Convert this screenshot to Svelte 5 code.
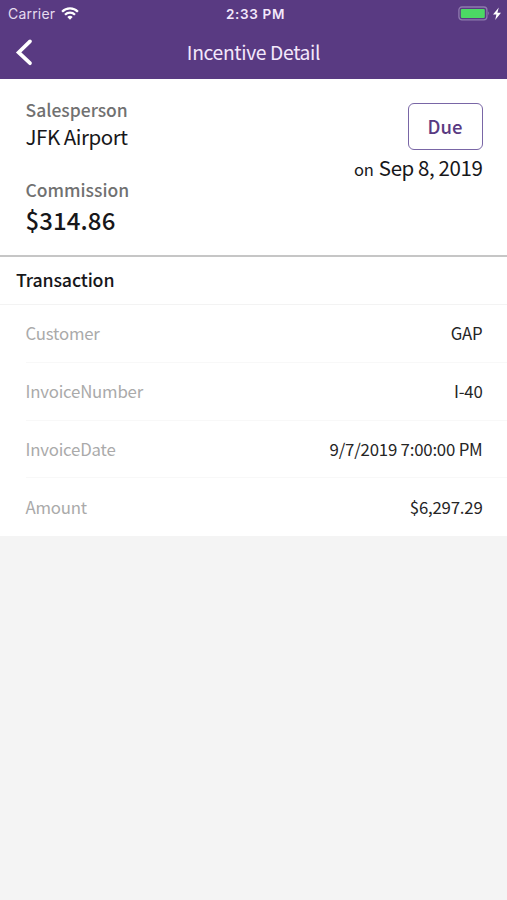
<script>
  const rows = [
    { label: 'Customer', value: 'GAP' },
    { label: 'InvoiceNumber', value: 'I-40' },
    { label: 'InvoiceDate', value: '9/7/2019 7:00:00 PM' },
    { label: 'Amount', value: '$6,297.29' }
  ];
</script>

<div class="screen">
  <header>
    <div class="status">
      <div class="carrier">
        <span>Carrier</span>
        <svg width="18" height="14" viewBox="0 0 18 14" fill="none" stroke="#fff" stroke-width="2.3">
          <path d="M1.1 4.7a11.2 11.2 0 0 1 15.8 0M4 7.7a7.1 7.1 0 0 1 10 0" />
          <path d="M9 12.7 6.3 10a3.9 3.9 0 0 1 5.4 0Z" fill="#fff" stroke="none" />
        </svg>
      </div>
      <span class="time">2:33 PM</span>
      <svg class="battery" width="44" height="16" viewBox="0 0 44 16">
        <rect x="0.9" y="1" width="28" height="12.8" rx="3" fill="none" stroke="#8e7aae" stroke-width="1.3" />
        <rect x="2.8" y="2.9" width="24" height="9" rx="1.2" fill="#4cd964" />
        <path d="M30.4 5.2q1.8 2.2 0 4.4Z" fill="#9c89b8" />
        <path d="M40.8 1.6 35 8.6h3.4L37.2 14 43 6.7h-3.6Z" fill="#fff" />
      </svg>
    </div>
    <div class="nav">
      <svg class="back" width="18" height="28" viewBox="0 0 18 28" fill="none" stroke="#fff" stroke-width="3.7" stroke-linecap="round">
        <path d="M15 3.4 3.6 14.4 15 25.2" />
      </svg>
      <span class="title">Incentive Detail</span>
    </div>
  </header>

  <section class="summary">
    <div class="left">
      <div class="caption">Salesperson</div>
      <div class="name">JFK Airport</div>
      <div class="caption com">Commission</div>
      <div class="sum">$314.86</div>
    </div>
    <div class="right">
      <div class="badge"><span>Due</span></div>
      <div class="date"><span class="on">on</span><span class="day">Sep 8, 2019</span></div>
    </div>
  </section>

  <h2>Transaction</h2>
  <div class="list">
    {#each rows as row}
      <div class="row">
        <span class="label">{row.label}</span>
        <span class="value">{row.value}</span>
      </div>
    {/each}
  </div>
</div>

<style>
  :global(body) { background: #f4f4f4; }
  .screen {
    height: 900px;
    background: #f4f4f4;
    font-family: "Noto Sans CJK SC", "Noto Sans", sans-serif;
    color: #17171a;
    white-space: nowrap;
    overflow: hidden;
  }
  header { height: 79px; background: #593a82; color: #f3e8fb; }
  .status {
    height: 27px;
    display: grid;
    grid-template-columns: 1fr auto 1fr;
    align-items: center;
    padding: 0 5px 0 8px;
    font-family: Inter, sans-serif;
    font-size: 14px;
  }
  .carrier { display: flex; align-items: center; gap: 6px; color: #e6dcef; letter-spacing: .2px; }
  .time { font-weight: 600; font-size: 13.5px; letter-spacing: .65px; padding-left: 1px; }
  .battery { justify-self: end; }
  .nav { height: 50px; display: grid; grid-template-columns: 60px 1fr 60px; align-items: center; }
  .back { margin-left: 15px; }
  .title { justify-self: center; font-size: 19.3px; line-height: 28px; letter-spacing: -.35px; }
  .summary {
    box-sizing: border-box;
    height: 178px;
    background: #fff;
    border-bottom: 2px solid #c6c6c6;
    padding: 16px 24.5px 0 25.5px;
    display: flex;
    justify-content: space-between;
  }
  .left { display: flex; flex-direction: column; align-items: flex-start; padding-top: 1px; }
  .caption { font-size: 17.5px; line-height: 28px; font-weight: 500; color: #717171; }
  .name { font-size: 20.5px; line-height: 24px; letter-spacing: -.45px; }
  .com { margin-top: 28px; }
  .sum { font-size: 24px; line-height: 32px; font-weight: 500; letter-spacing: .1px; }
  .right { display: flex; flex-direction: column; align-items: flex-end; }
  .badge {
    box-sizing: border-box;
    width: 75px;
    height: 47px;
    margin-top: 8px;
    padding-bottom: 2px;
    border: 1.5px solid #7966a6;
    border-radius: 6px;
    display: flex;
    align-items: center;
    justify-content: center;
    color: #593a82;
    font-size: 18.5px;
    font-weight: 500;
  }
  .date { display: flex; align-items: baseline; gap: 5px; margin-top: 2px; line-height: 30px; }
  .on { font-size: 16.5px; letter-spacing: -.1px; }
  .day { font-size: 20.5px; letter-spacing: -.4px; }
  h2 {
    box-sizing: border-box;
    margin: 0;
    height: 48px;
    padding-left: 16px;
    background: #fff;
    border-bottom: 1px solid #f3f3f3;
    font-size: 17.8px;
    line-height: 44px;
    font-weight: 500;
    letter-spacing: -.15px;
  }
  .list { background: #fff; height: 231px; }
  .row {
    box-sizing: border-box;
    height: 57.75px;
    margin-left: 25.5px;
    padding-right: 24.5px;
    display: flex;
    align-items: center;
    justify-content: space-between;
    border-bottom: 1px solid #f8f8f8;
    font-size: 16.8px;
    line-height: 24px;
    letter-spacing: -.2px;
  }
  .row:last-child { border-bottom-color: transparent; }
  .label { color: #aaa; }
  .value { color: #252525; }
</style>
